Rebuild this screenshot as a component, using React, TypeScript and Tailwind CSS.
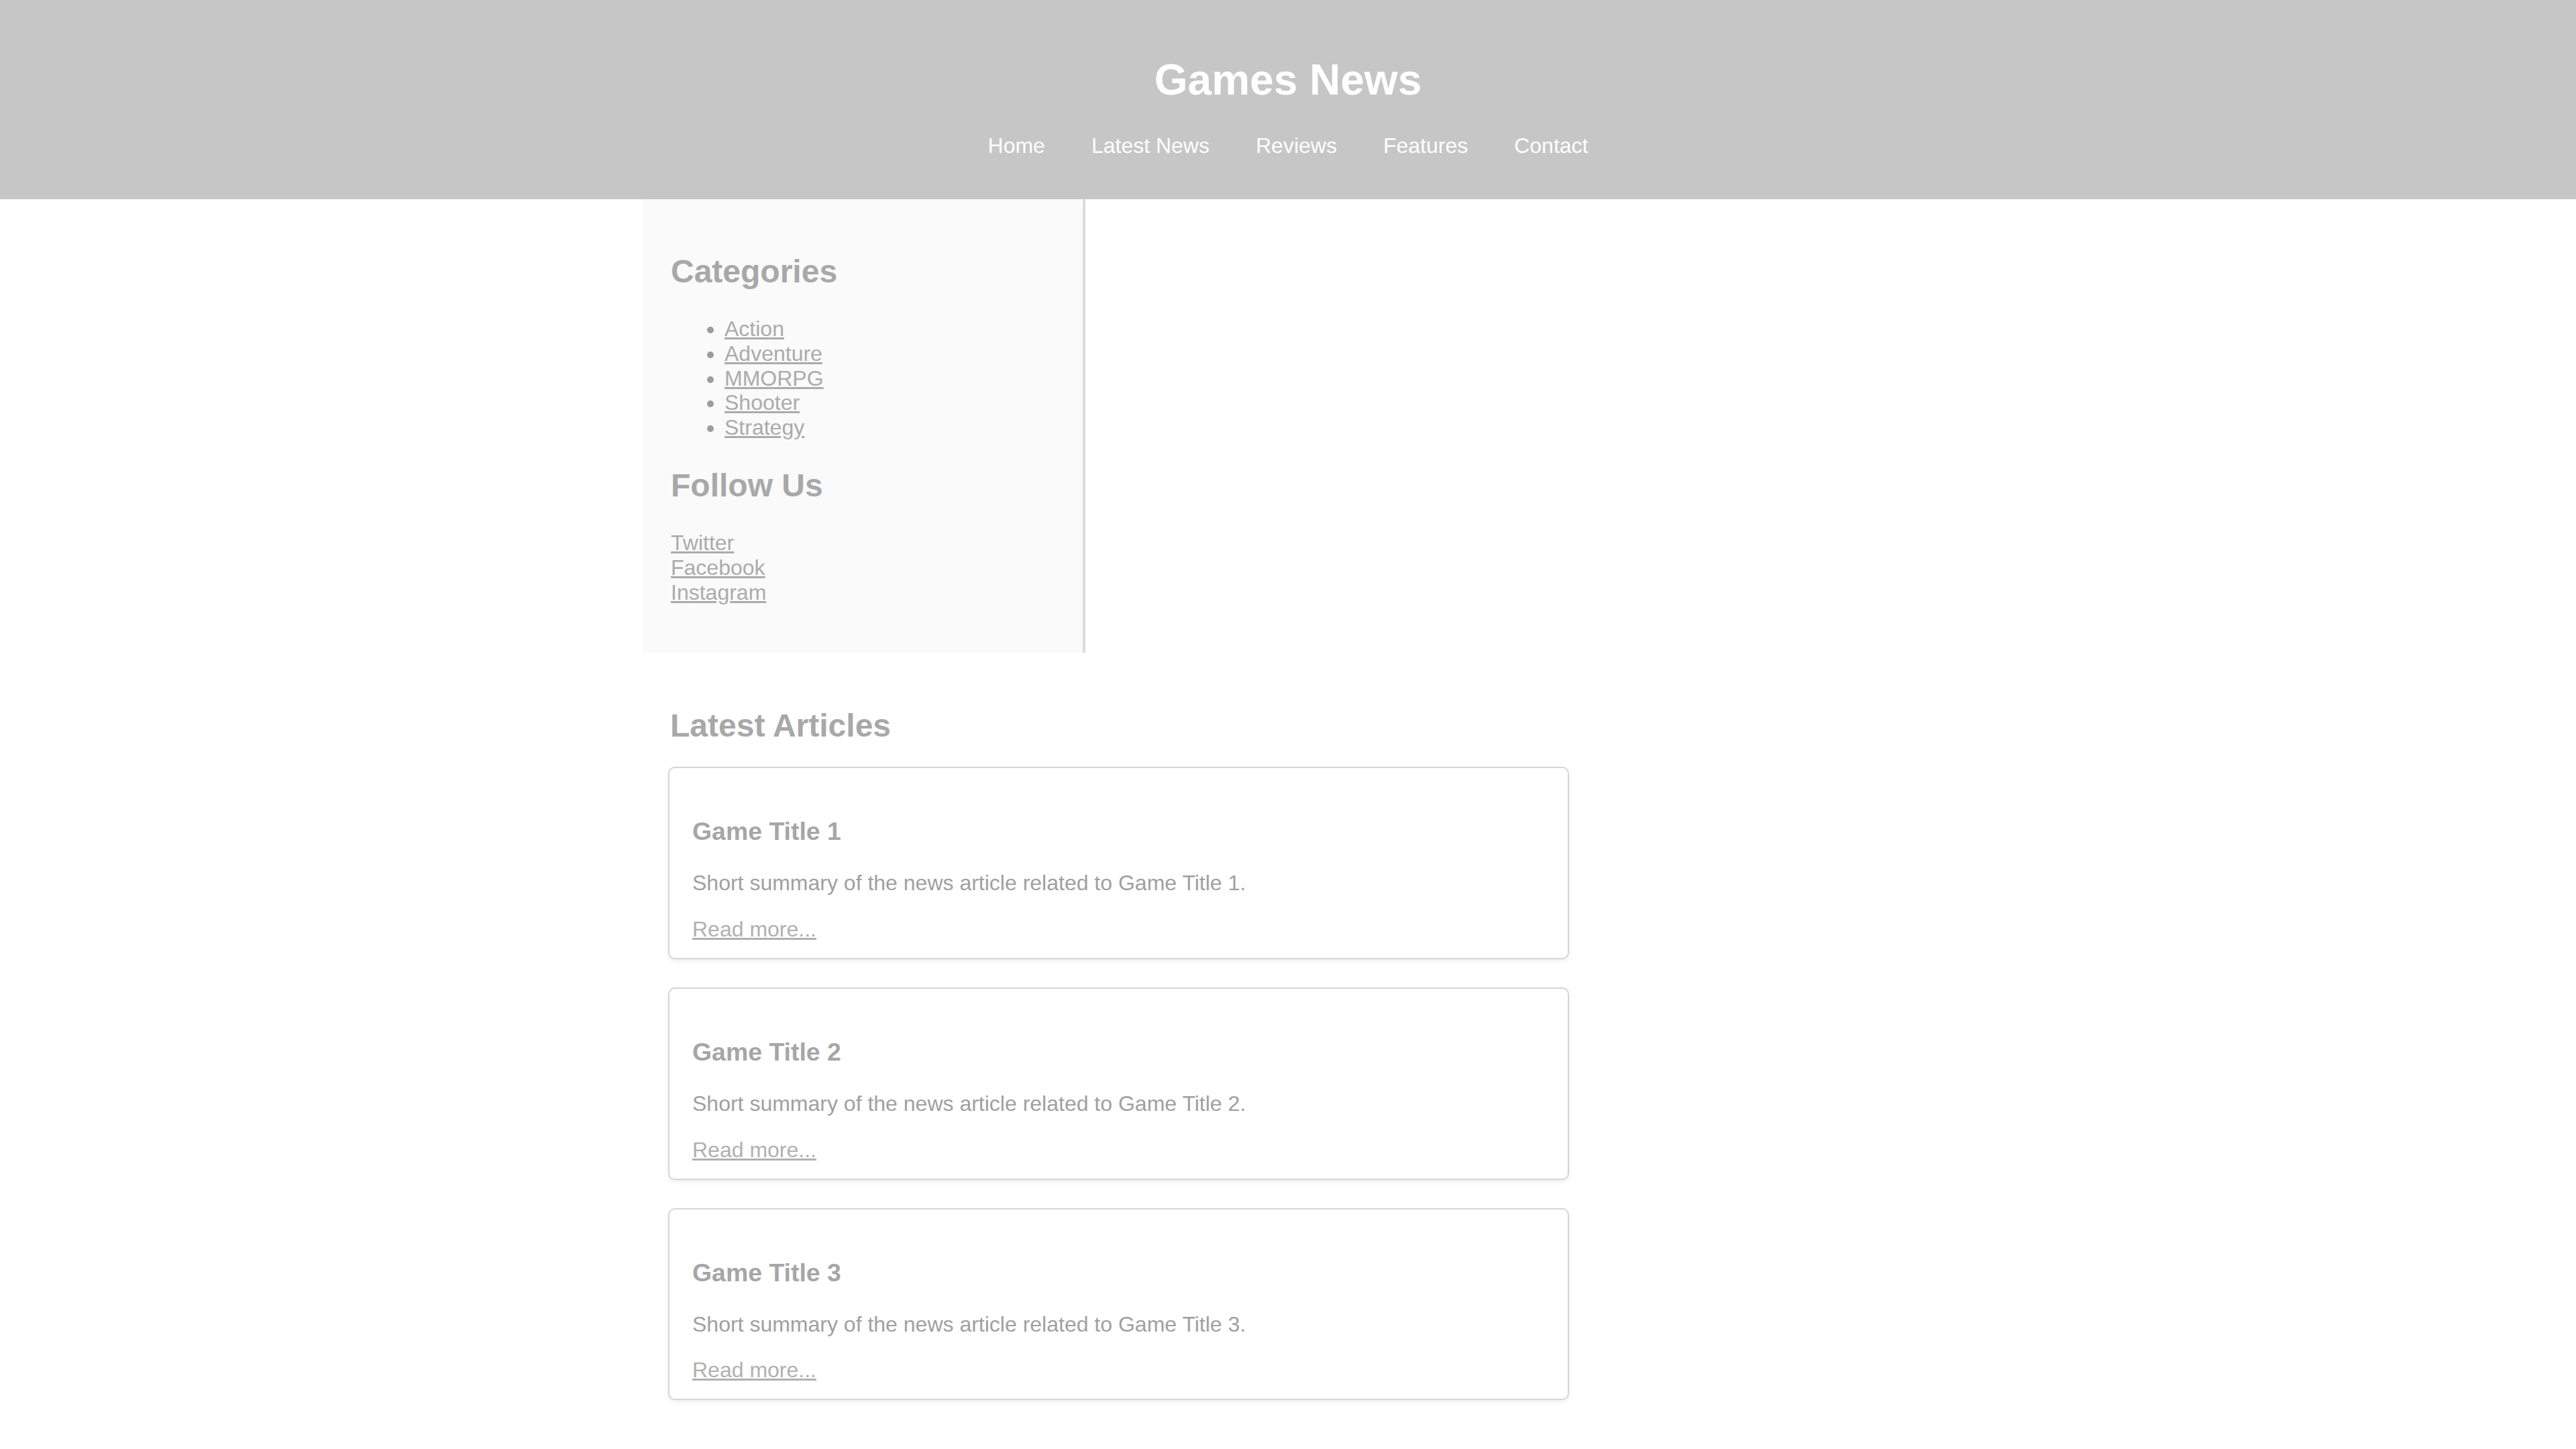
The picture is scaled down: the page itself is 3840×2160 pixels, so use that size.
import React from 'react';

const navItems = ['Home', 'Latest News', 'Reviews', 'Features', 'Contact'];
const categories = ['Action', 'Adventure', 'MMORPG', 'Shooter', 'Strategy'];
const socials = ['Twitter', 'Facebook', 'Instagram'];
const articles = [1, 2, 3].map((n) => ({
  id: n,
  title: `Game Title ${n}`,
  summary: `Short summary of the news article related to Game Title ${n}.`,
}));

const App = () => {
  return (
    <div className="min-h-screen bg-white font-['Liberation_Sans',Arial,sans-serif]">
      {/* header */}
      <header className="bg-[#c6c6c6] pt-[39px] pb-[61px] text-center text-white">
        <h1 className="mt-[43px] mb-[43px] text-[64px] font-bold leading-[74px]">Games News</h1>
        <nav className="flex justify-center gap-[69px] text-[32px] leading-[37px]">
          {navItems.map((item) => (
            <a key={item} href="#" className="text-white no-underline">
              {item}
            </a>
          ))}
        </nav>
      </header>

      <main className="mx-auto w-[1924px]">
        {/* sidebar */}
        <aside className="w-[660px] bg-[#fafafa] border-r-4 border-[#dcdcdc] pl-[42px] pr-10 pt-10 pb-10">
          <h2 className="my-[40px] text-[48px] font-bold leading-[55px] text-[#a8a8a8]">Categories</h2>
          <ul className="list-disc pl-[80px] text-[32px] leading-[36.8px] text-[#9c9c9c]">
            {categories.map((c) => (
              <li key={c}>
                <a href="#" className="text-[#ababab] underline">
                  {c}
                </a>
              </li>
            ))}
          </ul>
          <h2 className="my-[40px] text-[48px] font-bold leading-[55px] text-[#a8a8a8]">Follow Us</h2>
          <ul className="mb-[32px] text-[32px] leading-[36.8px]">
            {socials.map((s) => (
              <li key={s}>
                <a href="#" className="text-[#ababab] underline">
                  {s}
                </a>
              </li>
            ))}
          </ul>
        </aside>

        {/* articles */}
        <section className="w-[1421px] pl-[38px] pr-10 pt-[41px] pb-10">
          <h2 className="mt-[40px] mb-[34px] pl-[3px] text-[48px] font-bold leading-[55px] text-[#a8a8a8]">Latest Articles</h2>
          {articles.map((a) => (
            <article
              key={a.id}
              className="mb-[42px] rounded-[10px] border-2 border-[#d6d6d6] bg-white px-[34px] pt-[36px] pb-[24px] shadow-[0_3px_6px_rgba(0,0,0,0.07)]"
            >
              <h3 className="my-[37px] text-[37.44px] font-bold leading-[43px] text-[#a6a6a6]">{a.title}</h3>
              <p className="mb-[32px] text-[32px] leading-[36.8px] text-[#a0a0a0]">{a.summary}</p>
              <a href="#" className="text-[32px] leading-[36.8px] text-[#b0b0b0] underline">
                Read more...
              </a>
            </article>
          ))}
        </section>
      </main>
    </div>
  );
};

export default App;
